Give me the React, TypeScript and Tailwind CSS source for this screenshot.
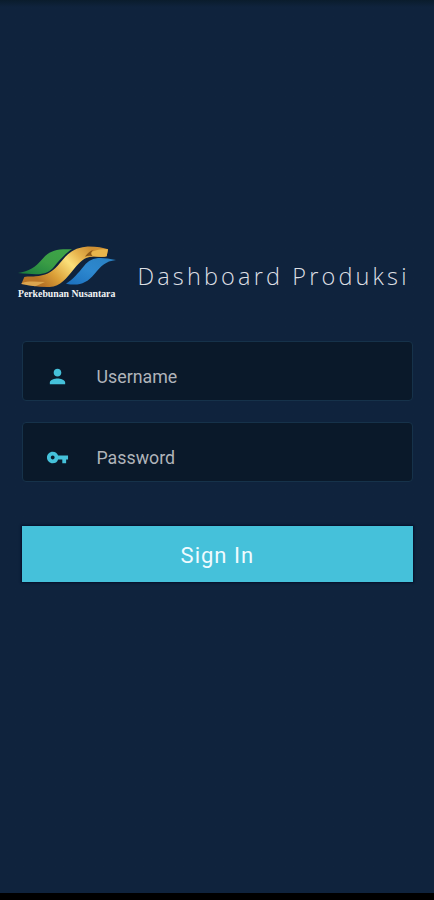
import { useState } from "react"
import { MdPerson, MdVpnKey } from "react-icons/md"

type FieldProps = {
  icon: React.ReactNode,
  label: string,
  type: string,
  value: string,
  onChange: (value: string) => void
}

const Field = ({ icon, label, type, value, onChange }: FieldProps) => {
  return (
    <label className="flex h-[60px] items-center rounded-[4px] border border-[#16324a] bg-[#0a192a] pl-[23px] pt-2.5">
      <span className="w-[51px] shrink-0 pt-px text-[#45c1da]">{icon}</span>
      <input
        type={type}
        value={value}
        placeholder={label}
        onChange={(e) => onChange(e.target.value)}
        className="w-full bg-transparent pt-0.5 text-[17.8px] text-[#b0b4ba] outline-none placeholder:text-[#b0b4ba]"
      />
    </label>
  )
}

const Logo = () => {
  return (
    <svg viewBox="0 0 345 192" width={115} height={64} className="shrink-0">
      <defs>
        <linearGradient id="gold" gradientUnits="userSpaceOnUse" x1="110" y1="145" x2="235" y2="20">
          <stop offset="0" stopColor="#b87426" />
          <stop offset="0.25" stopColor="#dba038" />
          <stop offset="0.58" stopColor="#fbe07a" />
          <stop offset="0.78" stopColor="#e8b54e" />
          <stop offset="1" stopColor="#cf9134" />
        </linearGradient>
        <linearGradient id="green" x1="0" y1="1" x2="1" y2="0">
          <stop offset="0" stopColor="#187a3d" />
          <stop offset="0.5" stopColor="#3a9d45" />
          <stop offset="1" stopColor="#3fa548" />
        </linearGradient>
        <linearGradient id="blue" x1="0" y1="1" x2="1" y2="0">
          <stop offset="0" stopColor="#1b6fbd" />
          <stop offset="0.5" stopColor="#2d88cf" />
          <stop offset="1" stopColor="#2a80c0" />
        </linearGradient>
      </defs>
      <path d="M24 99C58 94 75 82 98 56C120 31 140 26 186 28C167 39 149 60 132 80C112 104 94 106 24 99Z" fill="url(#green)" />
      <path d="M168 131C188 119 205 99 222 78C242 52 266 49 318 60C285 64 274 78 254 101C228 132 206 138 168 131Z" fill="url(#blue)" />
      <path d="M34 132L43 111C50 107 60 111 76 109C106 106 123 99 143 77C168 49 182 24 228 20C257 19 278 23 294 28L290 49C276 53 262 49 248 50C222 51 211 64 192 87C168 116 153 139 119 141C85 142 58 136 34 132Z" fill="url(#gold)" />
      <path d="M294 28C265 27 244 31 228 50C244 45 270 54 290 49Z" fill="#e9b64c" />
      <path d="M252 29C239 33 232 40 225 50C236 46 244 47 249 49C241 43 242 35 252 29Z" fill="#8f5a18" />
      <path d="M36 129C55 122 78 125 105 126C91 132 80 137 75 139C59 137 46 134 34 132Z" fill="#f2c76a" opacity="0.6" />
      <text
        x="24"
        y="170"
        textLength="292"
        lengthAdjust="spacingAndGlyphs"
        fill="#f1f3f5"
        className="font-['Liberation_Serif',serif] text-[31px] font-bold"
      >
        Perkebunan Nusantara
      </text>
    </svg>
  )
}

const App = () => {
  const [username, setUsername] = useState("")
  const [password, setPassword] = useState("")

  return (
    <div className="flex h-screen flex-col border-b-[7px] border-black bg-[#0f233d] bg-linear-to-b from-[#0a1c2c] to-[#0f233d] to-[7px] pt-60 font-[Roboto,sans-serif]">
      <header className="flex h-16 items-center pl-2.5">
        <Logo />
        <h1 className="ml-[12.5px] mt-[7px] whitespace-nowrap font-['Open_Sans',sans-serif] text-[23.5px] font-light leading-8 tracking-[3.15px] text-[#dddfe3]">
          Dashboard Produksi
        </h1>
      </header>

      <form className="mt-[37.4px] flex flex-col pl-[21.5px] pr-[20.8px]" onSubmit={(e) => e.preventDefault()}>
        <div className="flex flex-col gap-[21px]">
          <Field icon={<MdPerson size={23} />} label="Username" type="text" value={username} onChange={setUsername} />
          <Field icon={<MdVpnKey size={23} />} label="Password" type="password" value={password} onChange={setPassword} />
        </div>
        <button
          type="submit"
          className="mt-11 h-[56px] bg-[#45c1da] pt-0.5 text-[22px] tracking-[1px] text-[#f0fbff] shadow-[0_0_2px_1px_#05102a]"
        >
          Sign In
        </button>
      </form>
    </div>
  )
}

export default App
